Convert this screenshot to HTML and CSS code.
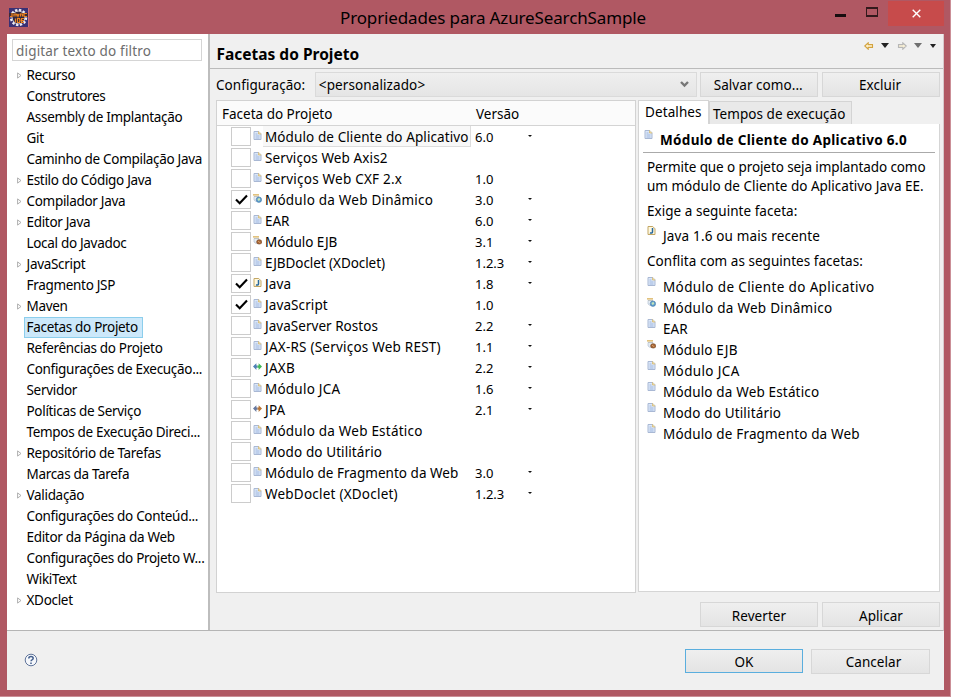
FILE: index.html
```html
<!DOCTYPE html>
<html lang="pt-BR">
<head>
<meta charset="utf-8">
<title>Propriedades para AzureSearchSample</title>
<link rel="stylesheet" href="styles.css">
</head>
<body>
<svg class="defs" width="0" height="0">
  <symbol id="doc" viewBox="0 0 8 9"><path d="M.5.5h4.8L7.5 2.8v5.7h-7z" fill="#dce8f8" stroke="#a9b8d4"/><path d="M5 .3v2.7h2.7" fill="#f3dfa5" stroke="#d2b56c" stroke-width=".7"/><path d="M2 3h2M2 5h4M2 7h4" stroke="#8fa9d8" stroke-width=".8"/></symbol>
  <symbol id="java" viewBox="0 0 8 9"><path d="M.5.5h4.8L7.5 2.8v5.7h-7z" fill="#fff8df" stroke="#c3a765"/><path d="M5 2v4q0 1.4-2.6.9" fill="none" stroke="#27689f" stroke-width="1.5"/></symbol>
  <symbol id="web" viewBox="0 0 9 9"><path d="M0 .8h6M1 2.8h5" fill="none" stroke="#d8ae55" stroke-width="1.3"/><path d="M1 2.5h4.8v4L3 7.5 1 6z" fill="#e4ebf3" stroke="#a9b9cc" stroke-width=".6"/><circle cx="5.9" cy="5.7" r="2.7" fill="#5c9dce" stroke="#4d7eaa" stroke-width=".6"/><path d="M4.4 5l2-1.2 1 2.2-2 1z" fill="#c5e5bb"/></symbol>
  <symbol id="ejb" viewBox="0 0 9 9"><path d="M0 .8h6M1 2.8h5" fill="none" stroke="#d8ae55" stroke-width="1.3"/><path d="M1 2.5h4.8v4L3 7.5 1 6z" fill="#e4ebf3" stroke="#a9b9cc" stroke-width=".6"/><ellipse cx="6.2" cy="5.9" rx="2.6" ry="2.2" fill="#a96736" stroke="#71401f" stroke-width=".6"/><path d="M5 5l2.4 2" stroke="#e3ae76" stroke-width=".8"/></symbol>
  <symbol id="jaxb" viewBox="0 0 8 7"><path d="M0 3.5L3 .5v2h1v2H3v2z" fill="#4f80b5"/><path d="M8 3.5L5 .5v2H4v2h1v2z" fill="#42b957"/></symbol>
  <symbol id="jpa" viewBox="0 0 8 7"><path d="M0 3.5L3 .5v2h1v2H3v2z" fill="#66789e"/><path d="M8 3.5L5 .5v2H4v2h1v2z" fill="#b87535"/></symbol>
  <symbol id="tick" viewBox="0 0 13 11"><path d="M1 5.5l3.7 3.7L12 1.5" fill="none" stroke="#000" stroke-width="2.1"/></symbol>
  <symbol id="twist" viewBox="0 0 5 7"><path d="M.6.9v5.2L4 3.5z" fill="#fff" stroke="#a6a6a6" stroke-width=".9"/></symbol>
  <symbol id="arrow" viewBox="0 0 10 8"><path d="M.8 4L4.2.8v1.8h4.3v2.8H4.2v1.8z" fill="#fff6d8" stroke="currentColor" stroke-width="1.1"/></symbol>
</svg>
<div class="window">
  <header class="titlebar">
    <svg class="app" width="20" height="19" viewBox="0 0 20 19"><path fill="#3a3074" d="M0 0h19v19H0z"/><path d="M19 0h1v19h-1z" fill="#d0707a"/><circle cx="9.5" cy="9.5" r="7.6" fill="none" stroke="#eeeef2" stroke-width="2.2" stroke-dasharray="2.4 1.6"/><circle cx="9.5" cy="9.5" r="6.4" fill="#30273f" stroke="#d3d0da"/><path d="M0 5h19v4H0z" fill="#3d2a36"/><path d="M3 5v3.5H1M5 8.5V6h2v2.5M8 6l1 2.5L10 6M11.500 8.500V6h2v2.500M15 5.500h3M15 8.500h3M15 5v3.500M6.500 10.500v4M8.500 10.500v4h2l.5-2-.5-2zM15 10.500h-2.500v4H15M13 12.500h2" fill="none" stroke="#ee8420" stroke-width="1.2"/></svg>
    <h1>Propriedades para AzureSearchSample</h1>
    <div class="controls"><i class="min"></i><i class="max"></i><span class="close"><svg width="9" height="9"><path d="M.7.7l7.6 7.6M8.3.7L.7 8.3" stroke="#fff" stroke-width="1.4"/></svg></span></div>
  </header>
  <main class="content">
    <nav class="sidebar">
      <div class="filter">digitar texto do filtro</div>
      <ul class="tree">
        <li><svg><use href="#twist"/></svg><span>Recurso</span></li>
        <li><span>Construtores</span></li>
        <li><span>Assembly de Implantação</span></li>
        <li><span>Git</span></li>
        <li><span>Caminho de Compilação Java</span></li>
        <li><svg><use href="#twist"/></svg><span>Estilo do Código Java</span></li>
        <li><svg><use href="#twist"/></svg><span>Compilador Java</span></li>
        <li><svg><use href="#twist"/></svg><span>Editor Java</span></li>
        <li><span>Local do Javadoc</span></li>
        <li><svg><use href="#twist"/></svg><span>JavaScript</span></li>
        <li><span>Fragmento JSP</span></li>
        <li><svg><use href="#twist"/></svg><span>Maven</span></li>
        <li><span class="selected">Facetas do Projeto</span></li>
        <li><span>Referências do Projeto</span></li>
        <li><span>Configurações de Execução...</span></li>
        <li><span>Servidor</span></li>
        <li><span>Políticas de Serviço</span></li>
        <li><span>Tempos de Execução Direci...</span></li>
        <li><svg><use href="#twist"/></svg><span>Repositório de Tarefas</span></li>
        <li><span>Marcas da Tarefa</span></li>
        <li><svg><use href="#twist"/></svg><span>Validação</span></li>
        <li><span>Configurações do Conteúd...</span></li>
        <li><span>Editor da Página da Web</span></li>
        <li><span>Configurações do Projeto W...</span></li>
        <li><span>WikiText</span></li>
        <li><svg><use href="#twist"/></svg><span>XDoclet</span></li>
      </ul>
    </nav>
    <section class="page">
      <div class="heading"><h2>Facetas do Projeto</h2>
        <div class="history"><svg class="back"><use href="#arrow"/></svg><i class="tri"></i><svg class="forward"><use href="#arrow"/></svg><i class="tri gray"></i><i class="tri small"></i></div>
      </div>
      <div class="config"><label>Configuração:</label><div class="select"><span>&lt;personalizado&gt;</span><svg width="9" height="7"><path d="M1 1l3.500 3.500L8 1" fill="none" stroke="#777" stroke-width="2.4"/></svg></div><button>Salvar como...</button><button>Excluir</button></div>
      <div class="panels">
        <div class="facets">
          <div class="thead"><span>Faceta do Projeto</span><span>Versão</span></div>
          <div class="row current"><b></b><svg><use href="#doc"/></svg><span class="name">Módulo de Cliente do Aplicativo</span><span>6.0</span><i></i></div>
          <div class="row"><b></b><svg><use href="#doc"/></svg><span class="name">Serviços Web Axis2</span></div>
          <div class="row"><b></b><svg><use href="#doc"/></svg><span class="name wide">Serviços Web CXF 2.x</span><span>1.0</span></div>
          <div class="row"><b><svg><use href="#tick"/></svg></b><svg><use href="#web"/></svg><span class="name wide">Módulo da Web Dinâmico</span><span>3.0</span><i></i></div>
          <div class="row"><b></b><svg><use href="#doc"/></svg><span class="name tight">EAR</span><span>6.0</span><i></i></div>
          <div class="row"><b></b><svg><use href="#ejb"/></svg><span class="name tight">Módulo EJB</span><span>3.1</span><i></i></div>
          <div class="row"><b></b><svg><use href="#doc"/></svg><span class="name tight">EJBDoclet (XDoclet)</span><span>1.2.3</span><i></i></div>
          <div class="row"><b><svg><use href="#tick"/></svg></b><svg><use href="#java"/></svg><span class="name">Java</span><span>1.8</span><i></i></div>
          <div class="row"><b><svg><use href="#tick"/></svg></b><svg><use href="#doc"/></svg><span class="name">JavaScript</span><span>1.0</span></div>
          <div class="row"><b></b><svg><use href="#doc"/></svg><span class="name normal">JavaServer Rostos</span><span>2.2</span><i></i></div>
          <div class="row"><b></b><svg><use href="#doc"/></svg><span class="name wide">JAX-RS (Serviços Web REST)</span><span>1.1</span><i></i></div>
          <div class="row"><b></b><svg><use href="#jaxb"/></svg><span class="name wide">JAXB</span><span>2.2</span><i></i></div>
          <div class="row"><b></b><svg><use href="#doc"/></svg><span class="name wide">Módulo JCA</span><span>1.6</span><i></i></div>
          <div class="row"><b></b><svg><use href="#jpa"/></svg><span class="name wide">JPA</span><span>2.1</span><i></i></div>
          <div class="row"><b></b><svg><use href="#doc"/></svg><span class="name wide">Módulo da Web Estático</span></div>
          <div class="row"><b></b><svg><use href="#doc"/></svg><span class="name">Modo do Utilitário</span></div>
          <div class="row"><b></b><svg><use href="#doc"/></svg><span class="name normal">Módulo de Fragmento da Web</span><span>3.0</span><i></i></div>
          <div class="row"><b></b><svg><use href="#doc"/></svg><span class="name wide">WebDoclet (XDoclet)</span><span>1.2.3</span><i></i></div>
        </div>
        <div class="details">
          <div class="tabs"><span class="active">Detalhes</span><span>Tempos de execução</span></div>
          <div class="info">
            <h3><svg><use href="#doc"/></svg>Módulo de Cliente do Aplicativo 6.0</h3>
            <p class="description">Permite que o projeto seja implantado como<br><span>um módulo de Cliente do Aplicativo Java EE.</span></p>
            <p class="requires">Exige a seguinte faceta:</p>
            <div class="item need"><svg><use href="#java"/></svg>Java 1.6 ou mais recente</div>
            <p class="conflicts">Conflita com as seguintes facetas:</p>
            <div class="item wide"><svg><use href="#doc"/></svg>Módulo de Cliente do Aplicativo</div>
            <div class="item medium"><svg><use href="#web"/></svg>Módulo da Web Dinâmico</div>
            <div class="item tight"><svg><use href="#doc"/></svg>EAR</div>
            <div class="item"><svg><use href="#ejb"/></svg>Módulo EJB</div>
            <div class="item wide"><svg><use href="#doc"/></svg>Módulo JCA</div>
            <div class="item"><svg><use href="#doc"/></svg>Módulo da Web Estático</div>
            <div class="item"><svg><use href="#doc"/></svg>Modo do Utilitário</div>
            <div class="item"><svg><use href="#doc"/></svg>Módulo de Fragmento da Web</div>
          </div>
        </div>
      </div>
      <div class="actions"><button>Reverter</button><button>Aplicar</button></div>
    </section>
  </main>
  <footer class="footer"><svg width="14" height="14" viewBox="0 0 14 14"><circle cx="7" cy="7" r="5.8" fill="#f5f7fb" stroke="#60759b"/><path d="M4.800 5.400q0-1.900 2.200-1.900t2.200 1.800q0 1-1.200 1.600-.9.400-.9 1.400M7 9.400v1.500" fill="none" stroke="#435f8d" stroke-width="1.500"/></svg><button class="ok">OK</button><button class="cancel">Cancelar</button></footer>
</div>
</body>
</html>
```
FILE: styles.css
```css
* { box-sizing: border-box; }
body { margin: 0; background: #fff; color: #000; font: 13.5px/21px "Noto Sans", "Open Sans", sans-serif; }
svg { display: block; flex: none; }
.defs { position: absolute; }
h1, h2, h3, p, ul { margin: 0; padding: 0; }
.window { width: 951px; height: 697px; background: #b05863; border-right: 1px solid #cb8f97; border-bottom: 1px solid #cb8f97; padding: 0 6px 6px 7px; overflow: hidden; }
.titlebar { height: 34px; display: flex; position: relative; }
.app { margin: 8px 0 0 2px; }
h1 { font-size: 17px; line-height: 24px; font-weight: 400; width: 320px; margin: 6px 0 0 304px; text-align: center; letter-spacing: -.13px; white-space: nowrap; }
.controls { display: flex; margin-left: auto; }
.min { width: 11px; height: 3px; margin: 14px 20px 0 0; background: #170d0f; }
.max { width: 12px; height: 10px; margin: 7px 10px 0 0; border: 2px solid #32191c; border-left-width: 1px; border-right-width: 1px; }
.close { width: 56px; height: 25px; margin-top: 1px; background: #c74b4b; display: grid; place-items: center; }
.content { height: 597px; display: grid; grid-template-columns: 203px 1fr; background: #f0f0f0; border-bottom: 1px solid #b5b5b5; border-right: 1px solid #d7c9cb; }
.sidebar { min-width: 0; background: #fff; border-right: 2px solid #bdbdbd; padding-top: 5px; }
.filter { width: 190px; height: 22px; margin-left: 5px; border: 1px solid #d5d5d5; padding: 1px 3px; color: #6d6d6d; line-height: 20px; letter-spacing: .18px; white-space: nowrap; }
.tree { list-style: none; padding-top: 4px; letter-spacing: -.31px; }
.tree li { height: 21px; display: flex; align-items: center; padding-left: 10px; white-space: nowrap; }
.tree svg { width: 5px; height: 7px; margin-right: -5px; }
.tree span { margin-left: 7px; padding: 0 1px 0 1.5px; border: 1px solid transparent; height: 21px; line-height: 19px; }
.tree .selected { background: #cce8fa; border-color: #8cceec; padding-right: 4px; }
.page { min-width: 0; }
.heading { height: 35px; border-bottom: 1px solid #bbb; display: flex; padding-left: 6.5px; }
h2 { font-size: 15.5px; line-height: 24px; margin-top: 8px; }
.history { display: flex; margin: 8px 7px 0 auto; align-items: flex-start; }
.history svg { width: 10px; height: 8px; margin-right: 7px; }
.back { color: #d3a33f; }
.forward { color: #b7b7b7; transform: scaleX(-1); }
.tri { width: 0; height: 0; border: 4px solid transparent; border-top: 5px solid #222; border-bottom: 0; margin: 1px 8px 0 0; }
.gray { border-top-color: #707070; margin-right: 8px; }
.small { border-width: 4px 3px 0; margin: 2px 0 0; }
.config { height: 31px; padding: 3px 3px 3px 6px; display: flex; }
.config label { width: 99px; line-height: 27px; letter-spacing: .05px; }
.select { width: 383px; height: 25px; margin-right: 3px; border: 1px solid #dadada; background: linear-gradient(#efefef, #e5e5e5); padding: 0 7px 0 3px; line-height: 26px; display: flex; justify-content: space-between; align-items: center; letter-spacing: .1px; }
button { font: inherit; color: #000; width: 118px; height: 25px; padding: 3px 0 0; border: 1px solid #d7d7d7; background: linear-gradient(#efefef, #e4e4e4); letter-spacing: .05px; }
.config button { padding: 1px 2px 0 0; }
.config button + button { margin-left: 4px; }
.panels { display: grid; grid-template-columns: 420px 302px; column-gap: 2px; height: 493px; padding-left: 6px; }
.facets { background: #fff; border: 1px solid #d2d2d2; }
.thead { display: flex; height: 25px; line-height: 27px; background: #fbfbfb; border-bottom: 1px solid #d4d4d4; padding-left: 5px; }
.thead span:first-child { width: 254px; }
.row { height: 21px; display: flex; padding-left: 14px; align-items: center; line-height: 23px; white-space: nowrap; }
.row b { width: 20px; height: 19px; border: 1px solid #ccc; margin-right: 2px; display: grid; place-items: center; }
.row b svg { width: 13px; height: 11px; }
.row > svg { width: 9px; height: 9px; margin: -2px 1px 0 0; }
.row .name { width: 212px; height: 21px; padding-left: 2px; letter-spacing: .1px; }
.row .name + span { width: 53px; height: 21px; font-size: 13px; }
.row i { border: 2px solid transparent; border-top-color: #111; margin-top: 1px; height: 2px; }
.row .name.tight { letter-spacing: -.07px; }
.row .name.normal { letter-spacing: .03px; }
.row .name.wide { letter-spacing: .22px; }
.current .name { background: #f8f8f8; border: solid #ddd; border-width: 0 1px 1px 0; width: 208px; margin-right: 4px; }
.details { display: flex; flex-direction: column; height: 492px; }
.tabs { height: 24px; display: flex; align-items: flex-end; }
.tabs span { height: 23px; padding: 1px 5px 0 3px; background: #e9e9e9; border: 1px solid #d4d4d4; border-bottom: 0; white-space: nowrap; width: 143px; line-height: 23px; letter-spacing: .05px; }
.tabs .active { height: 24px; background: #fff; width: 71px; padding: 0 6px; line-height: 22px; letter-spacing: .1px; }
.info { flex: 1; background: #fff; border: 1px solid #d5d5d5; border-top: 0; padding: 3px 4px 0; }
h3 { font-size: 13.5px; line-height: 26px; height: 26px; border-bottom: 1px solid #aaa; display: flex; white-space: nowrap; letter-spacing: .32px; }
h3 svg { width: 9px; height: 9px; margin: 3px 7px 0 1px; }
.info p { padding-left: 4px; white-space: nowrap; letter-spacing: .03px; }
.info .description { line-height: 19px; margin-top: 5px; letter-spacing: -.1px; }
.description span { letter-spacing: 0; }
.requires { margin-top: 5px; }
.need { margin-top: 4px; }
.conflicts { margin: 4px 0 5px; }
.item { height: 21px; line-height: 21px; display: flex; padding-left: 4px; white-space: nowrap; letter-spacing: .16px; }
.item.wide { letter-spacing: .36px; }
.item.medium { letter-spacing: .28px; }
.item.tight { letter-spacing: 0; }
.item svg { width: 9px; height: 9px; margin: 0 7px 0 0; }
.actions { display: flex; justify-content: flex-end; gap: 4px; padding: 9px 3px 0; }
.footer { height: 59px; background: #f0f0f0; display: flex; padding: 18px 14px 0 17px; }
.footer > svg { margin: 4px auto 0 0; }
.footer button + button { margin-left: 8px; }
.ok { border-color: #5aaede; height: 24px; padding-top: 2px; }
.cancel { width: 119px; padding: 2px 0 0 6px; }
```
